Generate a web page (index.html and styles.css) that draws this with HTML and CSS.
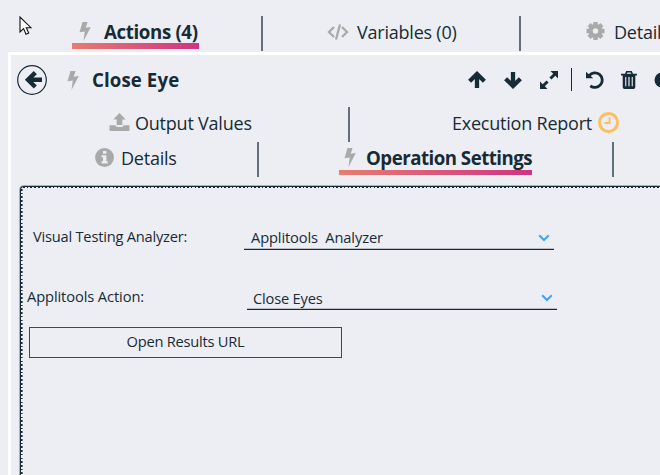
FILE: index.html
```
<!DOCTYPE html>
<html lang="en">
<head>
<meta charset="utf-8">
<title>Close Eye</title>
<link rel="stylesheet" href="styles.css">
</head>
<body>
<svg width="0" height="0" class="defs">
  <symbol id="bolt" viewBox="0 0 12 19"><path d="M3.5 0H8.6L6.7 5.8L11.8 5L4.5 19L5.8 9.4L.5 10.3Z"/></symbol>
</svg>
<nav class="tabs">
  <div class="tab actions active"><svg class="bolt"><use href="#bolt"/></svg><span class="t-actions">Actions (4)</span></div>
  <div class="tab variables"><svg class="code" viewBox="0 0 22 16"><path d="M7 3L2 8L7 13M15 3L20 8L15 13M13 .5L9 15.5" fill="none" stroke="#a9a9a9" stroke-width="2.3"/></svg><span class="t-variables">Variables (0)</span></div>
  <div class="tab config"><svg class="gear" viewBox="-9 -9 18 18"><circle r="4.9" fill="none" stroke="#a9a9a9" stroke-width="4.4"/><path d="M0-9V-6M0 9V6M-9 0H-6M9 0H6M-6.4-6.4L-4-4M6.4 6.4L4 4M-6.4 6.4L-4 4M6.4-6.4L4-4" stroke="#a9a9a9" stroke-width="4.4"/></svg><span>Details</span></div>
</nav>
<main class="panel">
  <header class="head">
    <svg class="back" viewBox="0 0 30 30"><circle cx="15" cy="15" r="14.3" fill="none" stroke="#172b36" stroke-width="1.2"/><path d="M25 14.8H11M18.3 7.6L11 14.8L18.3 22" fill="none" stroke="#172b36" stroke-width="4.4"/></svg>
    <svg class="bolt"><use href="#bolt"/></svg>
    <h1>Close Eye</h1>
    <div class="tools">
      <svg class="up" viewBox="0 0 18 18"><path d="M9 17V3M1.6 10.3L9 3L16.4 10.3"/></svg>
      <svg class="down" viewBox="0 0 18 18"><path d="M9 1V15M1.6 7.7L9 15L16.4 7.7"/></svg>
      <svg class="expand" viewBox="0 0 18 18"><path class="solid" d="M18 0V7.5L15.3 4.8L11.5 8.6L9.4 6.5L13.2 2.7L10.5 0ZM0 18V10.5L2.7 13.2L6.5 9.4L8.6 11.5L4.8 15.3L7.5 18Z"/></svg>
      <i class="rule"></i>
      <svg class="undo" viewBox="0 0 18 18"><path d="M3.2 4.6A7.3 7.3 0 1 1 4.3 14.8" stroke-width="2.8"/><path class="solid" d="M0 .8L7.2 7.2H0Z"/></svg>
      <svg class="trash" viewBox="0 0 16 18"><path class="solid" fill-rule="evenodd" d="M0 2.7H4L5.2 0H10.8L12 2.7H16V4.5H14.3V16Q14.3 18 12.5 18H3.5Q1.7 18 1.7 16V4.5H0ZM5.7 2.7H10.3L9.7 1.4H6.3ZM4.2 6V15.2H5.3V6ZM7.4 6V15.2H8.6V6ZM10.7 6V15.2H11.8V6Z"/></svg>
      <svg class="toggle" viewBox="0 0 16 16"><circle class="solid" cx="8" cy="8" r="7.5"/></svg>
    </div>
  </header>
  <nav class="subtabs">
    <div class="tab output"><svg class="upload" viewBox="0 0 20 18"><path d="M10 0L16.2 6.6H12.8V12H7.2V6.6H3.8ZM0 12.3H5.8Q6.3 14 8 14H12Q13.7 14 14.2 12.3H20V17Q20 18 19 18H1Q0 18 0 17Z"/></svg><span class="t-output">Output Values</span></div>
    <div class="tab report"><span class="t-report">Execution Report</span><svg class="clock" viewBox="0 0 20 20"><circle cx="10" cy="10" r="8.6"/><path d="M11 5V10.5H6" stroke-width="1.8"/></svg></div>
  </nav>
  <nav class="subtabs second">
    <div class="tab details"><svg class="info" viewBox="0 0 19 19"><circle cx="9.5" cy="9.5" r="9.4"/><path d="M8 3H11.4V5.8H8ZM6.5 7.3H11.4V13.3H12.8V15.4H6.5V13.3H8V9.2H6.5Z" fill="#edeef4"/></svg><span class="t-details">Details</span></div>
    <div class="tab operation"><div class="opactive"><svg class="bolt"><use href="#bolt"/></svg><span class="t-operation">Operation Settings</span></div></div>
  </nav>
  <section class="settings">
    <div class="field first"><label class="l-analyzer">Visual Testing Analyzer:</label><div class="select"><span class="v-analyzer">Applitools&nbsp; Analyzer</span><svg class="chev" viewBox="0 0 12 8"><path d="M1.2 1.3L6 6L10.8 1.3"/></svg></div></div>
    <div class="field next"><label class="l-action">Applitools Action:</label><div class="select"><span class="v-action">Close Eyes</span><svg class="chev" viewBox="0 0 12 8"><path d="M1.2 1.3L6 6L10.8 1.3"/></svg></div></div>
    <button>Open Results URL</button>
  </section>
</main>
<svg class="cursor" viewBox="0 0 13 20"><path d="M1 1V16L4.6 12.6L7 18.2L9.7 17L7.3 11.7H12Z" fill="#fff" stroke="#111" stroke-width="1.1"/></svg>
</body>
</html>
```
FILE: styles.css
```
* { box-sizing: border-box; }
body { margin: 0; width: 660px; height: 475px; overflow: hidden; background: #edeef4; color: #172b36; font: 18px "Open Sans", sans-serif; white-space: nowrap; }
svg { display: block; flex: none; fill: #a9a9a9; }
.defs { position: absolute; }
.bolt { width: 12px; height: 19px; }
.tabs { display: flex; height: 52px; padding-top: 16px; }
.tab { display: flex; flex: none; height: 35px; line-height: 32px; border-right: 2px solid #60717b; }
.actions { width: 263px; padding-left: 72px; position: relative; z-index: 0; font-weight: 700; }
.actions .bolt { margin: 6px 13px 0 7px; }
.actions::after { content: ""; position: absolute; z-index: -1; left: 72px; top: 27px; width: 127px; height: 5.5px; background: linear-gradient(90deg, #e77d70, #cf3483); }
.variables { width: 258px; padding-left: 64px; }
.code { width: 22px; height: 16px; margin: 8px 8px 0 0; }
.config { padding-left: 65px; border: 0; }
.gear { width: 19px; height: 18px; margin: 6px 9px 0 0; }
.t-actions { font-size: 18.67px; letter-spacing: -0.35px; }
.t-variables, .t-output, .t-report, .t-details, .config span { letter-spacing: -0.22px; }
.t-operation { font-size: 18.67px; line-height: 31px; letter-spacing: -0.5px; }
.panel { margin-left: 8px; height: 423px; border-left: 3px solid #fff; border-top: 3px solid #fff; }
.head { display: flex; height: 52px; }
.back { width: 30px; height: 30px; margin: 10px 0 0 6px; }
.head .bolt { margin: 16px 13px 0 20px; }
h1 { flex: none; margin: 0; width: 376px; font-size: 18.67px; line-height: 50px; letter-spacing: 0.1px; }
.tools { display: flex; flex: none; height: 18px; margin-top: 16px; }
.tools svg { width: 18px; height: 18px; fill: none; stroke: #172b36; stroke-width: 4.3; }
.tools .solid { fill: #172b36; stroke: none; }
.tools .down { margin-left: 18px; }
.tools .expand { margin-left: 18px; }
.rule { width: 1px; height: 23px; margin: -3px 14px 0 13px; background: #172b36; }
.tools .trash { width: 16px; margin-left: 17px; }
.tools .toggle { width: 16px; margin-left: 17px; }
.subtabs { display: flex; height: 35px; }
.subtabs .tab { height: 35px; line-height: 33px; }
.output { width: 339px; padding-left: 98px; }
.upload { width: 21px; height: 18px; margin: 6px 5px 0 0; }
.report { padding-left: 102px; border: 0; }
.clock { width: 21px; height: 21px; margin: 5px 0 0 6px; fill: none; stroke: #ffbd5f; stroke-width: 2.8; }
.details { width: 248px; padding-left: 84px; }
.info { width: 19px; height: 19px; margin: 6px 7px 0 0; }
.operation { width: 355px; padding-left: 80px; }
.opactive { display: flex; position: relative; z-index: 0; width: 193px; font-weight: 700; }
.opactive .bolt { margin: 6px 10px 0 5px; }
.opactive::after { content: ""; position: absolute; z-index: -1; left: 0; top: 28px; width: 193px; height: 5px; background: linear-gradient(90deg, #e77d70, #cf3483); }
.settings { margin: 9px 0 0 9px; height: 300px; border: 1px solid #172b36; border-width: 1px 0 0 1px; border-radius: 4px 0 0 0; position: relative; font-size: 14.67px; box-shadow: -0.5px -0.5px 0 #65747d; }
.settings::before { content: ""; position: absolute; inset: 0; background: repeating-linear-gradient(90deg, #172b36 0 1.6px, transparent 1.6px 3.73px) 2px 0 / 100% 1.4px no-repeat, repeating-linear-gradient(180deg, #172b36 0 1.6px, transparent 1.6px 3.73px) 0 2px / 1.6px 100% no-repeat; }
.field { display: flex; }
label { flex: none; line-height: 18px; }
.select { display: flex; justify-content: space-between; width: 310px; height: 23px; line-height: 20px; border-bottom: 1px solid #172b36; box-shadow: inset 0 -1px 0 #b9bfc5; }
.first { padding: 40px 0 0 12px; }
.l-analyzer { width: 211px; letter-spacing: -0.22px; }
.first .select { padding: 0 4px 0 7px; }
.next { padding: 37px 0 0 6px; }
.l-action { width: 220px; letter-spacing: -0.1px; }
.next .select { padding: 0 4px 0 6px; line-height: 22px; }
.v-analyzer { letter-spacing: -0.12px; }
.v-action { letter-spacing: -0.2px; }
.chev { width: 12px; height: 8px; margin-top: 7px; fill: none; stroke: #3ba5fb; stroke-width: 2; }
button { display: block; margin: 17px 0 0 8px; width: 313px; height: 31px; padding: 0 0 3px; background: none; border: 1px solid #394b56; color: #172b36; font: 14.67px/26px "Open Sans", sans-serif; letter-spacing: -0.24px; }
.cursor { position: absolute; left: 19px; top: 16px; width: 13px; height: 20px; }
```
